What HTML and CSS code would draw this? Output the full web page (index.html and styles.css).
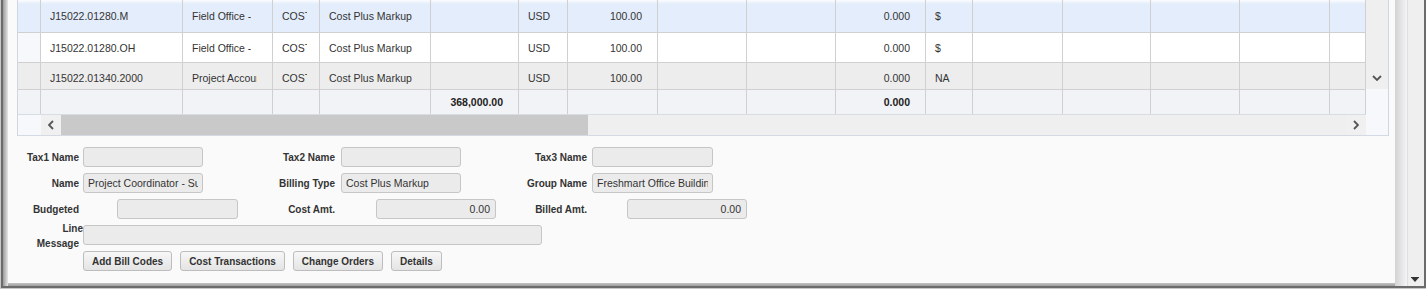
FILE: index.html
```html
<!DOCTYPE html>
<html lang="en">
<head>
    <meta charset="UTF-8">
    <title>Bill Codes</title>
    <link rel="stylesheet" href="styles.css">
</head>
<body>
    <div class="window">
        <div class="frame">
            <div class="shade-left"></div>

            <div class="panel">
                <div class="grid">
                    <div class="grid-rows">
                        <div class="row row-sel">
                            <div class="c rn"></div>
                            <div class="c">J15022.01280.M</div>
                            <div class="c desc"><span class="clip">Field Office -</span></div>
                            <div class="c code"><span class="clip">COST</span></div>
                            <div class="c">Cost Plus Markup</div>
                            <div class="c"></div>
                            <div class="c">USD</div>
                            <div class="c num">100.00</div>
                            <div class="c"></div>
                            <div class="c"></div>
                            <div class="c num">0.000</div>
                            <div class="c">$</div>
                            <div class="c"></div>
                            <div class="c"></div>
                            <div class="c"></div>
                            <div class="c"></div>
                            <div class="c"></div>
                        </div>
                        <div class="row">
                            <div class="c rn"></div>
                            <div class="c">J15022.01280.OH</div>
                            <div class="c desc"><span class="clip">Field Office -</span></div>
                            <div class="c code"><span class="clip">COST</span></div>
                            <div class="c">Cost Plus Markup</div>
                            <div class="c"></div>
                            <div class="c">USD</div>
                            <div class="c num">100.00</div>
                            <div class="c"></div>
                            <div class="c"></div>
                            <div class="c num">0.000</div>
                            <div class="c">$</div>
                            <div class="c"></div>
                            <div class="c"></div>
                            <div class="c"></div>
                            <div class="c"></div>
                            <div class="c"></div>
                        </div>
                        <div class="row row-alt">
                            <div class="c rn"></div>
                            <div class="c">J15022.01340.2000</div>
                            <div class="c desc"><span class="clip">Project Accounting</span></div>
                            <div class="c code"><span class="clip">COST</span></div>
                            <div class="c">Cost Plus Markup</div>
                            <div class="c"></div>
                            <div class="c">USD</div>
                            <div class="c num">100.00</div>
                            <div class="c"></div>
                            <div class="c"></div>
                            <div class="c num">0.000</div>
                            <div class="c">NA</div>
                            <div class="c"></div>
                            <div class="c"></div>
                            <div class="c"></div>
                            <div class="c"></div>
                            <div class="c"></div>
                        </div>
                    </div>

                    <div class="vscroll">
                        <svg width="10" height="6" viewBox="0 0 10 6"><path d="M1 1l4 4 4-4" fill="none" stroke="#555" stroke-width="1.8"/></svg>
                    </div>

                    <div class="row summary">
                        <div class="c rn"></div>
                        <div class="c"></div>
                        <div class="c"></div>
                        <div class="c"></div>
                        <div class="c"></div>
                        <div class="c num">368,000.00</div>
                        <div class="c"></div>
                        <div class="c"></div>
                        <div class="c"></div>
                        <div class="c"></div>
                        <div class="c num">0.000</div>
                        <div class="c"></div>
                        <div class="c"></div>
                        <div class="c"></div>
                        <div class="c"></div>
                        <div class="c"></div>
                        <div class="c"></div>
                    </div>

                    <div class="corner"></div>

                    <div class="hscroll">
                        <div class="hs-lock"></div>
                        <div class="hs-btn">
                            <svg width="6" height="10" viewBox="0 0 6 10"><path d="M5 1L1 5l4 4" fill="none" stroke="#555" stroke-width="1.8"/></svg>
                        </div>
                        <div class="hs-thumb"></div>
                        <div class="hs-track"></div>
                        <div class="hs-btn">
                            <svg width="6" height="10" viewBox="0 0 6 10"><path d="M1 1l4 4-4 4" fill="none" stroke="#555" stroke-width="1.8"/></svg>
                        </div>
                    </div>
                </div>

                <div class="form">
                    <div class="frow">
                        <div class="lbl l1">Tax1 Name</div>
                        <div class="fld f1"></div>
                        <div class="lbl l2">Tax2 Name</div>
                        <div class="fld f2"></div>
                        <div class="lbl l3">Tax3 Name</div>
                        <div class="fld f3"></div>
                    </div>
                    <div class="frow">
                        <div class="lbl l1">Name</div>
                        <div class="fld f1"><span class="clip">Project Coordinator - Subcontract</span></div>
                        <div class="lbl l2">Billing Type</div>
                        <div class="fld f2"><span class="clip">Cost Plus Markup</span></div>
                        <div class="lbl l3">Group Name</div>
                        <div class="fld f3"><span class="clip">Freshmart Office Building</span></div>
                    </div>
                    <div class="frow">
                        <div class="lbl l1">Budgeted</div>
                        <div class="fld amt a1"></div>
                        <div class="lbl la2">Cost Amt.</div>
                        <div class="fld amt a2">0.00</div>
                        <div class="lbl la3">Billed Amt.</div>
                        <div class="fld amt a3">0.00</div>
                    </div>
                    <div class="frow">
                        <div class="lbl l1 two-line"><span class="line1">Line</span><br>Message</div>
                        <div class="fld f1 wide"></div>
                    </div>
                    <div class="frow buttons">
                        <button class="btn">Add Bill Codes</button>
                        <button class="btn">Cost Transactions</button>
                        <button class="btn">Change Orders</button>
                        <button class="btn">Details</button>
                    </div>
                </div>
            </div>

            <div class="shade-right"></div>
            <div class="outer-scroll">
                <svg width="8" height="5" viewBox="0 0 8 5"><path d="M0 0h8v1H0z M0.5 1h7L4 5z" fill="#333"/></svg>
            </div>
            <div class="shade-bottom"></div>
        </div>
    </div>
</body>
</html>
```

FILE: styles.css
```css
body, html {
    margin: 0;
    padding: 0;
    overflow: hidden;
    font-family: "Liberation Sans", Arial, sans-serif;
    color: #333;
}

.window {
    width: 1426px;
    height: 289px;
    box-sizing: border-box;
    padding: 0 0 1px 1px;
    background: #c8c8c8;
}

.frame {
    height: 288px;
    box-sizing: border-box;
    border: 2px solid #6b6b6b;
    border-top: none;
    display: grid;
    grid-template-columns: 5px 1387px 12px 1fr;
    grid-template-rows: 283px 1fr;
}

.shade-left {
    grid-row: 1 / 3;
    background: linear-gradient(to right, #9a9a9a, #e6e6e6);
}

.shade-right {
    grid-column: 3;
    grid-row: 1 / 3;
    background: linear-gradient(to right, #d3d3d3, #f3f4f6);
}

.shade-bottom {
    grid-column: 2;
    grid-row: 2;
    background: linear-gradient(#c4c4c4, #9c9c9c);
}

.outer-scroll {
    grid-column: 4;
    grid-row: 1 / 3;
    background: #efefef;
    border-left: 1px solid #e0e0e0;
    display: flex;
    align-items: flex-end;
    justify-content: center;
    padding-bottom: 4px;
    padding-right: 2px;
}

.panel {
    grid-column: 2;
    grid-row: 1;
    background: #fafafa;
}

/* grid */
.grid {
    --cols: 23px 142px 90px 47px 111px 88px 49px 90px 89px 89px 90px 47px 90px 88px 89px 90px 36px;
    margin-left: 9px;
    width: 1372px;
    box-sizing: border-box;
    border-left: 1px solid #cfd6df;
    border-right: 1px solid #cfd6df;
    border-bottom: 1px solid #d3dae3;
    display: grid;
    grid-template-columns: 1348px 22px;
    grid-template-rows: 89px 26px 20px;
    font-size: 10.5px;
}

.grid-rows {
    overflow: hidden;
}

.row {
    display: grid;
    grid-template-columns: var(--cols);
    height: 30px;
    box-sizing: border-box;
    border-bottom: 1px solid #d0d0d0;
    background: #fff;
}

.row-sel {
    height: 33px;
    background: linear-gradient(#fbfcfe, #e4edfb 4px);
}

.row-alt {
    background: #ededed;
}

.c {
    box-sizing: border-box;
    border-right: 1px solid #d0d0d0;
    padding: 0 10px 0 9px;
    display: flex;
    align-items: center;
    white-space: nowrap;
    overflow: hidden;
}

.c.num {
    justify-content: flex-end;
    padding-right: 15px;
}

.c.code {
    padding-right: 12px;
}

.c.desc {
    padding-right: 15px;
}

.clip {
    display: block;
    overflow: hidden;
    white-space: nowrap;
}

.rn {
    background: #f6f8fc;
}

.row-sel .rn,
.row-alt .rn {
    background: transparent;
}

.summary {
    height: 26px;
    border-top: 1px solid #d0d0d0;
    border-bottom: 1px solid #d7dde5;
    background: #f1f3f6;
    font-weight: bold;
    color: #222;
}

.summary .rn {
    background: transparent;
}

.vscroll {
    background: #efefef;
    display: flex;
    align-items: flex-end;
    justify-content: center;
    padding-bottom: 8px;
    box-sizing: border-box;
}

.corner {
    grid-column: 2;
    grid-row: 2 / 4;
    background: #f6f8fb;
}

.hscroll {
    display: flex;
    background: #efefef;
}

.hs-lock {
    width: 23px;
    background: #f6f8fc;
}

.hs-btn {
    width: 20px;
    display: flex;
    align-items: center;
    justify-content: center;
    background: #f0f0f0;
}

.hs-thumb {
    width: 527px;
    background: #c9c9c9;
}

.hs-track {
    flex: 1;
}

/* form */
.form {
    padding-top: 11px;
    display: flex;
    flex-direction: column;
    gap: 6px;
}

.frow {
    display: flex;
    align-items: center;
    height: 20px;
}

.lbl {
    flex: none;
    font-size: 10px;
    font-weight: bold;
    text-align: right;
    color: #333;
}

.l1 { width: 71px; }
.l2 { width: 132px; }
.l3 { width: 126px; }
.la2 { width: 97px; }
.la3 { width: 91px; }

.two-line {
    line-height: 14.5px;
    padding-top: 3px;
}

.line1 {
    margin-right: -4px;
}

.fld {
    flex: none;
    height: 20px;
    box-sizing: border-box;
    border: 1px solid #c6c6c6;
    border-radius: 3px;
    background: #ebebeb;
    padding: 0 4px;
    line-height: 18px;
    font-size: 10.5px;
    color: #333;
    white-space: nowrap;
    overflow: hidden;
}

.f1 { width: 120px; margin-left: 4px; }
.f2 { width: 120px; margin-left: 6px; }
.f3 { width: 121px; margin-left: 5px; }

.fld.amt {
    text-align: right;
    padding: 0 5px 0 0;
}

.a1 { width: 121px; margin-left: 38px; }
.a2 { width: 120px; margin-left: 41px; }
.a3 { width: 120px; margin-left: 40px; }

.fld.wide {
    width: 459px;
}

.buttons {
    margin-left: 75px;
    gap: 8px;
}

.btn {
    height: 20px;
    padding: 0 8px;
    border: 1px solid #bdbdbd;
    border-radius: 3px;
    background: linear-gradient(#f7f7f7, #e4e4e4);
    font-family: "Liberation Sans", Arial, sans-serif;
    font-size: 10px;
    font-weight: bold;
    color: #333;
    cursor: pointer;
}
```
